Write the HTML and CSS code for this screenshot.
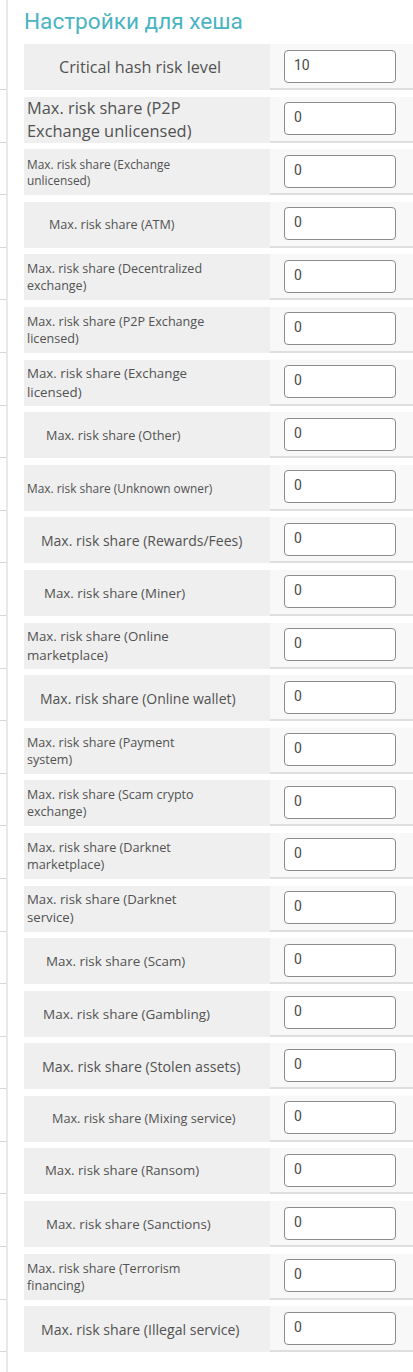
FILE: index.html
```html
<!DOCTYPE html>
<html lang="ru">
<head>
<meta charset="utf-8">
<title>Настройки для хеша</title>
<link rel="stylesheet" href="styles.css">
</head>
<body>
<div class="page">
  <h2 class="title">Настройки для хеша</h2>
  <div class="rows">
    <div class="row"><span class="tick"></span><span></span><div class="label fs162 p35">Critical hash risk level</div><div class="field"><input class="inp" type="text" value="10"></div></div>
    <div class="row"><span class="tick"></span><span></span><div class="label fs164 p3">Max. risk share (P2P<br>Exchange unlicensed)</div><div class="field"><input class="inp" type="text" value="0"></div></div>
    <div class="row"><span class="tick"></span><span></span><div class="label fs119 p3">Max. risk share (Exchange<br>unlicensed)</div><div class="field"><input class="inp" type="text" value="0"></div></div>
    <div class="row"><span class="tick"></span><span></span><div class="label fs126 p25">Max. risk share (ATM)</div><div class="field"><input class="inp" type="text" value="0"></div></div>
    <div class="row"><span class="tick"></span><span></span><div class="label fs125 p3">Max. risk share (Decentralized<br>exchange)</div><div class="field"><input class="inp" type="text" value="0"></div></div>
    <div class="row"><span class="tick"></span><span></span><div class="label fs126 p3">Max. risk share (P2P Exchange<br>licensed)</div><div class="field"><input class="inp" type="text" value="0"></div></div>
    <div class="row"><span class="tick"></span><span></span><div class="label fs133 p3">Max. risk share (Exchange<br>licensed)</div><div class="field"><input class="inp" type="text" value="0"></div></div>
    <div class="row"><span class="tick"></span><span></span><div class="label fs127 p22">Max. risk share (Other)</div><div class="field"><input class="inp" type="text" value="0"></div></div>
    <div class="row"><span class="tick"></span><span></span><div class="label fs119 p3">Max. risk share (Unknown owner)</div><div class="field"><input class="inp" type="text" value="0"></div></div>
    <div class="row"><span class="tick"></span><span></span><div class="label fs140 p17">Max. risk share (Rewards/Fees)</div><div class="field"><input class="inp" type="text" value="0"></div></div>
    <div class="row"><span class="tick"></span><span></span><div class="label fs133 p20">Max. risk share (Miner)</div><div class="field"><input class="inp" type="text" value="0"></div></div>
    <div class="row"><span class="tick"></span><span></span><div class="label fs133 p3">Max. risk share (Online<br>marketplace)</div><div class="field"><input class="inp" type="text" value="0"></div></div>
    <div class="row"><span class="tick"></span><span></span><div class="label fs140 p16">Max. risk share (Online wallet)</div><div class="field"><input class="inp" type="text" value="0"></div></div>
    <div class="row"><span class="tick"></span><span></span><div class="label fs126 p3">Max. risk share (Payment<br>system)</div><div class="field"><input class="inp" type="text" value="0"></div></div>
    <div class="row"><span class="tick"></span><span></span><div class="label fs125 p3">Max. risk share (Scam crypto<br>exchange)</div><div class="field"><input class="inp" type="text" value="0"></div></div>
    <div class="row"><span class="tick"></span><span></span><div class="label fs127 p3">Max. risk share (Darknet<br>marketplace)</div><div class="field"><input class="inp" type="text" value="0"></div></div>
    <div class="row"><span class="tick"></span><span></span><div class="label fs132 p3">Max. risk share (Darknet<br>service)</div><div class="field"><input class="inp" type="text" value="0"></div></div>
    <div class="row"><span class="tick"></span><span></span><div class="label fs134 p22">Max. risk share (Scam)</div><div class="field"><input class="inp" type="text" value="0"></div></div>
    <div class="row"><span class="tick"></span><span></span><div class="label fs135 p19">Max. risk share (Gambling)</div><div class="field"><input class="inp" type="text" value="0"></div></div>
    <div class="row"><span class="tick"></span><span></span><div class="label fs142 p18">Max. risk share (Stolen assets)</div><div class="field"><input class="inp" type="text" value="0"></div></div>
    <div class="row"><span class="tick"></span><span></span><div class="label fs127 p28">Max. risk share (Mixing service)</div><div class="field"><input class="inp" type="text" value="0"></div></div>
    <div class="row"><span class="tick"></span><span></span><div class="label fs132 p21">Max. risk share (Ransom)</div><div class="field"><input class="inp" type="text" value="0"></div></div>
    <div class="row"><span class="tick"></span><span></span><div class="label fs133 p22">Max. risk share (Sanctions)</div><div class="field"><input class="inp" type="text" value="0"></div></div>
    <div class="row"><span class="tick"></span><span></span><div class="label fs126 p3">Max. risk share (Terrorism<br>financing)</div><div class="field"><input class="inp" type="text" value="0"></div></div>
    <div class="row"><span class="tick"></span><span></span><div class="label fs141 p17">Max. risk share (Illegal service)</div><div class="field"><input class="inp" type="text" value="0"></div></div>
  </div>
</div>
</body>
</html>
```

FILE: styles.css
```css
* { box-sizing: border-box; }
html, body { margin: 0; padding: 0; background: #fff; }
body { font-family: "Open Sans", "Noto Sans", sans-serif; }

.page {
  width: 413px;
  min-height: 1372px;
  overflow: hidden;
  background: linear-gradient(#e8e8e8, #e8e8e8) 6px 0 / 2px 100% no-repeat;
}

.title {
  margin: 8px 0 8px 24px;
  height: 28px;
  font-family: Roboto, "Liberation Sans", sans-serif;
  font-weight: 400;
  font-size: 22.6px;
  line-height: 28px;
  color: #4ab4c3;
  white-space: nowrap;
}

.rows { display: flex; flex-direction: column; }

.row {
  display: grid;
  grid-template-columns: 6px 18px 246px 1fr;
  height: 46px;
  margin-bottom: 6.6px;
}

.tick { border-bottom: 1px solid #d8d8d8; }

.label {
  display: flex;
  align-items: center;
  background: #efefef;
  color: #525252;
  line-height: 1.36;
  white-space: nowrap;
}

.field {
  display: flex;
  align-items: center;
  padding-left: 14px;
  background: #f8f8f8;
  border-bottom: 2px solid #dedede;
}

.inp {
  width: 112px;
  height: 33px;
  margin: 0;
  padding: 0 0 3px 9px;
  border: 1px solid #8c8c8c;
  border-radius: 4px;
  background: #fff;
  font-family: Roboto, "Liberation Sans", sans-serif;
  font-size: 14px;
  color: #4a4a4a;
  outline: none;
}

.fs119 { font-size: 11.9px; }
.fs125 { font-size: 12.5px; }
.fs126 { font-size: 12.6px; }
.fs127 { font-size: 12.7px; }
.fs132 { font-size: 13.2px; }
.fs133 { font-size: 13.3px; }
.fs134 { font-size: 13.4px; }
.fs135 { font-size: 13.5px; }
.fs140 { font-size: 14px; }
.fs141 { font-size: 14.1px; }
.fs142 { font-size: 14.2px; }
.fs162 { font-size: 16.2px; }
.fs164 { font-size: 16.4px; }

.p3 { padding-left: 3px; }
.p16 { padding-left: 16px; }
.p17 { padding-left: 17px; }
.p18 { padding-left: 18px; }
.p19 { padding-left: 19px; }
.p20 { padding-left: 20px; }
.p21 { padding-left: 21px; }
.p22 { padding-left: 22px; }
.p25 { padding-left: 25px; }
.p28 { padding-left: 28px; }
.p35 { padding-left: 35px; }
```
